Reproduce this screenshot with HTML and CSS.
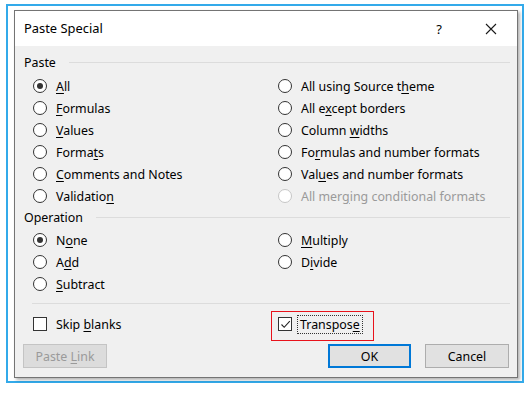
FILE: index.html
```html
<!DOCTYPE html>
<html>
<head>
<meta charset="utf-8">
<title>Paste Special</title>
<link rel="stylesheet" href="styles.css">
</head>
<body>
<div class="frame">
  <div class="dialog">
    <div class="titlebar">
      <span class="title">Paste Special</span>
      <span class="help">?</span>
      <span class="close">
        <svg width="12" height="12" viewBox="0 0 12 12"><path d="M1 1L11 11M11 1L1 11" stroke="#1a1a1a" stroke-width="1.1" fill="none"/></svg>
      </span>
    </div>
    <div class="body">
      <div class="legend"><span>Paste</span><i class="rule"></i></div>
      <div class="options paste">
        <label class="opt"><span class="radio on"></span><span><u>A</u>ll</span></label>
        <label class="opt"><span class="radio"></span><span>All using Source t<u>h</u>eme</span></label>
        <label class="opt"><span class="radio"></span><span><u>F</u>ormulas</span></label>
        <label class="opt"><span class="radio"></span><span>All e<u>x</u>cept borders</span></label>
        <label class="opt"><span class="radio"></span><span><u>V</u>alues</span></label>
        <label class="opt"><span class="radio"></span><span>Column <u>w</u>idths</span></label>
        <label class="opt"><span class="radio"></span><span>Forma<u>t</u>s</span></label>
        <label class="opt"><span class="radio"></span><span>Fo<u>r</u>mulas and number formats</span></label>
        <label class="opt"><span class="radio"></span><span><u>C</u>omments and Notes</span></label>
        <label class="opt"><span class="radio"></span><span>Val<u>u</u>es and number formats</span></label>
        <label class="opt"><span class="radio"></span><span>Validatio<u>n</u></span></label>
        <label class="opt disabled"><span class="radio"></span><span>All mer<u>g</u>ing conditional formats</span></label>
      </div>
      <div class="legend op"><span>Operation</span><i class="rule"></i></div>
      <div class="options operation">
        <label class="opt"><span class="radio on"></span><span>N<u>o</u>ne</span></label>
        <label class="opt"><span class="radio"></span><span><u>M</u>ultiply</span></label>
        <label class="opt"><span class="radio"></span><span>A<u>d</u>d</span></label>
        <label class="opt"><span class="radio"></span><span>D<u>i</u>vide</span></label>
        <label class="opt"><span class="radio"></span><span><u>S</u>ubtract</span></label>
      </div>
      <div class="sep"></div>
      <div class="options checks">
        <label class="opt"><span class="check"></span><span>Skip <u>b</u>lanks</span></label>
        <label class="opt marked">
          <span class="check">
            <svg width="11" height="11" viewBox="0 0 11 11"><path d="M1.5 5.5L4.2 8.3L9.8 2.2" stroke="#222" stroke-width="1.1" fill="none"/></svg>
          </span>
          <span class="focus">Transpos<u>e</u></span>
        </label>
      </div>
      <div class="buttons">
        <button class="btn" disabled>Paste <u>L</u>ink</button>
        <span class="spacer"></span>
        <button class="btn default">OK</button>
        <button class="btn">Cancel</button>
      </div>
    </div>
  </div>
</div>
</body>
</html>
```

FILE: styles.css
```css
* { box-sizing: border-box; }
html, body { margin: 0; padding: 0; background: #fff; }
body { font-family: "Noto Sans", "Open Sans", sans-serif; font-size: 12.4px; color: #000; }
u { text-underline-offset: 2px; text-decoration-thickness: 1px; }

.frame { width: 518px; height: 379px; margin: 4px 0 0 6px; border: 2px solid #33aaea; }
.dialog { width: 504px; height: 368px; margin: 4px 0 0 6px; border: 1px solid #747474; background: #f0f0f0; box-shadow: 2px 2px 3px rgba(0,0,0,0.3); display: flex; flex-direction: column; }

.titlebar { height: 35px; background: #fff; display: flex; align-items: center; padding-left: 9px; }
.title { flex: 1; padding-bottom: 1px; font-size: 12.9px; }
.help { width: 16px; text-align: center; font-size: 13px; }
.close { width: 12px; height: 12px; margin: 0 20px 0 38px; display: flex; }

.body { flex: 1; padding: 8px 7px 0 9px; display: flex; flex-direction: column; }
.legend { height: 16px; display: flex; align-items: center; gap: 13px; }
.legend.op { margin-top: 2px; }
.rule { flex: 1; height: 1px; background: #dcdcdc; }

.options { display: grid; grid-template-columns: 245px 1fr; grid-auto-rows: 22px; padding-left: 9px; }
.paste { margin-top: 5px; }
.operation { margin-top: 4px; }
.opt { display: flex; align-items: center; gap: 9px; white-space: nowrap; }
.radio { width: 14px; height: 14px; border: 1px solid #333; border-radius: 50%; background: #fff; display: flex; align-items: center; justify-content: center; }
.radio.on::after { content: ""; width: 6px; height: 6px; border-radius: 50%; background: #333; }
.disabled { color: #9a9a9a; }
.disabled .radio { border-color: #c6c6c6; }

.sep { height: 1px; background: #dcdcdc; margin: 8px 0 9px 8px; }
.check { width: 14px; height: 14px; border: 1px solid #333; background: #fff; display: flex; align-items: center; justify-content: center; }
.marked { position: relative; gap: 6px; }
.marked::after { content: ""; position: absolute; left: -7px; top: -2px; width: 101px; height: 28px; border: 1px solid #e8121b; }
.focus { outline: 1px dotted #333; padding: 0 2px; line-height: 17px; }

.buttons { display: flex; gap: 14px; margin: 9px 1px 0 -1px; }
.spacer { flex: 1; }
.btn { width: 84px; height: 24px; font: inherit; color: #000; background: #e1e1e1; border: 1px solid #adadad; padding: 0; }
.btn[disabled] { background: #dcdcdc; border-color: #c4c4c4; color: #9a9a9a; }
.btn.default { border: 2px solid #0078d7; width: 83px; }
```
